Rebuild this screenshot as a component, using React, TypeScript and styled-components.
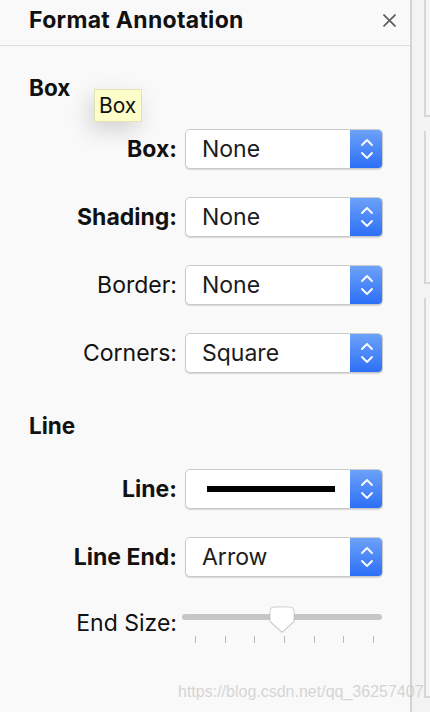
import React from 'react'
import styled, { createGlobalStyle } from 'styled-components'

const GlobalStyle = createGlobalStyle`
  html, body {
    margin: 0;
    padding: 0;
    background: #f3f3f3;
  }
  body {
    font-family: Inter, "Liberation Sans", Arial, sans-serif;
    color: #111;
  }
`

const Screen = styled.div`
  position: relative;
  display: flex;
  width: 430px;
  height: 712px;
  overflow: hidden;
  background: #f3f3f3;
`

const Panel = styled.section`
  position: relative;
  width: 410px;
  flex: none;
  background: #f9f9f9;
  border-right: 2px solid #d3d3d3;
  display: flex;
  flex-direction: column;
`

const Header = styled.header`
  height: 46px;
  box-sizing: border-box;
  border-bottom: 1px solid #dedede;
  display: flex;
  align-items: flex-start;
  justify-content: space-between;
  padding: 6px 14px 0 29px;
`

const Title = styled.h1`
  margin: 0;
  font-size: 23px;
  line-height: 28px;
  font-weight: 700;
  letter-spacing: 0.3px;
`

const CloseButton = styled.button`
  margin-top: 8px;
  width: 13px;
  height: 13px;
  padding: 0;
  border: 0;
  background: none;
  display: block;
`

const Body = styled.div`
  display: flex;
  flex-direction: column;
  padding-top: 28px;
`

const SectionTitle = styled.h2<{ $gap: number }>`
  margin: 0 0 ${(p) => p.$gap}px 29px;
  font-size: 22.5px;
  line-height: 28px;
  font-weight: 700;
`

const Rows = styled.div<{ $after?: number }>`
  display: flex;
  flex-direction: column;
  gap: 28px;
  margin-bottom: ${(p) => p.$after ?? 0}px;
`

const Row = styled.div<{ $top?: boolean }>`
  display: grid;
  grid-template-columns: 177px 198px;
  column-gap: 8px;
  align-items: ${(p) => (p.$top ? 'start' : 'center')};
`

const Label = styled.label<{ $bold?: boolean; $offset?: number }>`
  text-align: right;
  font-size: 23px;
  line-height: 28px;
  font-weight: ${(p) => (p.$bold ? 700 : 400)};
  margin-top: ${(p) => p.$offset ?? 0}px;
  white-space: nowrap;
`

const Select = styled.div`
  position: relative;
  height: 40px;
  box-sizing: border-box;
  display: flex;
  align-items: stretch;
  background: #fff;
  border: 1px solid #cbcbcb;
  border-radius: 5px;
  box-shadow: 0 1px 1px rgba(0, 0, 0, 0.14);
  overflow: hidden;
`

const SelectValue = styled.div`
  flex: 1;
  display: flex;
  align-items: center;
  padding-left: 16px;
  font-size: 23px;
  line-height: 28px;
  color: #1c1c1c;
`

const LineSample = styled.div`
  width: 128px;
  height: 6px;
  margin-left: 5px;
  background: #000;
`

const Stepper = styled.div`
  width: 33px;
  flex: none;
  margin: -1px -1px -1px 0;
  background: linear-gradient(#6ea3f9, #2b6ef6);
  display: flex;
  align-items: center;
  justify-content: center;
`

const Slider = styled.div`
  position: relative;
  height: 40px;
  margin-left: -3px;
`

const Track = styled.div`
  margin-top: 9px;
  height: 6px;
  width: 200px;
  border-radius: 3px;
  background: #c6c6c6;
`

const Ticks = styled.div`
  display: flex;
  justify-content: space-between;
  margin: 16px 0 0 13px;
  width: 179px;
`

const Tick = styled.span`
  width: 1px;
  height: 7px;
  background: #b9b9b9;
`

const Thumb = styled.svg`
  position: absolute;
  left: 87px;
  top: 1px;
`

const Tooltip = styled.div`
  position: absolute;
  left: 94px;
  top: 89px;
  width: 48px;
  height: 33px;
  box-sizing: border-box;
  background: #fdfdc9;
  border: 1px solid #e2e2b4;
  box-shadow: -4px 8px 22px rgba(0, 0, 0, 0.16);
  font-size: 21px;
  line-height: 31px;
  padding-left: 4px;
  color: #111;
`

const Side = styled.aside`
  flex: 1;
  display: flex;
  flex-direction: column;
  gap: 14px;
  padding-left: 12px;
`

const SidePane = styled.div<{ $h: number }>`
  height: ${(p) => p.$h}px;
  box-sizing: border-box;
  border-left: 2px solid #d6d6d6;
  border-bottom: 2px solid #d6d6d6;
  background: #f6f6f6;
`

const Watermark = styled.div`
  position: absolute;
  left: 178px;
  top: 683px;
  font-family: "Liberation Sans", Arial, sans-serif;
  font-size: 16px;
  color: rgba(200, 200, 200, 0.75);
  white-space: nowrap;
  pointer-events: none;
`

const Chevrons = () => (
  <svg width="16" height="26" viewBox="0 0 16 26">
    <path d="M3 9 L8 4 L13 9" fill="none" stroke="#fff" strokeWidth="1.8" strokeLinecap="round" strokeLinejoin="round" />
    <path d="M3 17 L8 22 L13 17" fill="none" stroke="#fff" strokeWidth="1.8" strokeLinecap="round" strokeLinejoin="round" />
  </svg>
)

const Dropdown = ({ children }: { children: React.ReactNode }) => (
  <Select>
    <SelectValue>{children}</SelectValue>
    <Stepper>
      <Chevrons />
    </Stepper>
  </Select>
)

const boxRows = [
  { label: 'Box:', value: 'None', bold: true },
  { label: 'Shading:', value: 'None', bold: true },
  { label: 'Border:', value: 'None', bold: false },
  { label: 'Corners:', value: 'Square', bold: false },
]

export default function App() {
  return (
    <Screen>
      <GlobalStyle />
      <Panel>
        <Header>
          <Title>Format Annotation</Title>
          <CloseButton aria-label="Close">
            <svg width="13" height="13" viewBox="0 0 13 13">
              <path d="M0.5 0.5 L12.5 12.5 M12.5 0.5 L0.5 12.5" stroke="#5a5a5a" strokeWidth="1.6" />
            </svg>
          </CloseButton>
        </Header>
        <Body>
          <SectionTitle $gap={27}>Box</SectionTitle>
          <Rows $after={39}>
            {boxRows.map((r) => (
              <Row key={r.label}>
                <Label $bold={r.bold}>{r.label}</Label>
                <Dropdown>{r.value}</Dropdown>
              </Row>
            ))}
          </Rows>
          <SectionTitle $gap={29}>Line</SectionTitle>
          <Rows>
            <Row>
              <Label $bold>Line:</Label>
              <Dropdown>
                <LineSample />
              </Dropdown>
            </Row>
            <Row>
              <Label $bold>Line End:</Label>
              <Dropdown>Arrow</Dropdown>
            </Row>
            <Row $top>
              <Label $offset={4}>End Size:</Label>
              <Slider>
                <Track />
                <Ticks>
                  {Array.from({ length: 7 }).map((_, i) => (
                    <Tick key={i} />
                  ))}
                </Ticks>
                <Thumb width="26" height="28" viewBox="0 0 26 28">
                  <defs>
                    <filter id="ts" x="-30%" y="-30%" width="160%" height="160%">
                      <feDropShadow dx="0" dy="0.5" stdDeviation="0.6" floodColor="#000" floodOpacity="0.3" />
                    </filter>
                  </defs>
                  <path
                    d="M5 1 H21 A4 4 0 0 1 25 5 V15 L13 26 L1 15 V5 A4 4 0 0 1 5 1 Z"
                    fill="#fff"
                    stroke="#c9c9c9"
                    strokeWidth="0.8"
                    filter="url(#ts)"
                  />
                </Thumb>
              </Slider>
            </Row>
          </Rows>
        </Body>
        <Tooltip>Box</Tooltip>
      </Panel>
      <Side>
        <SidePane $h={117} />
        <SidePane $h={153} />
        <SidePane $h={400} />
      </Side>
      <Watermark>https://blog.csdn.net/qq_36257407</Watermark>
    </Screen>
  )
}
